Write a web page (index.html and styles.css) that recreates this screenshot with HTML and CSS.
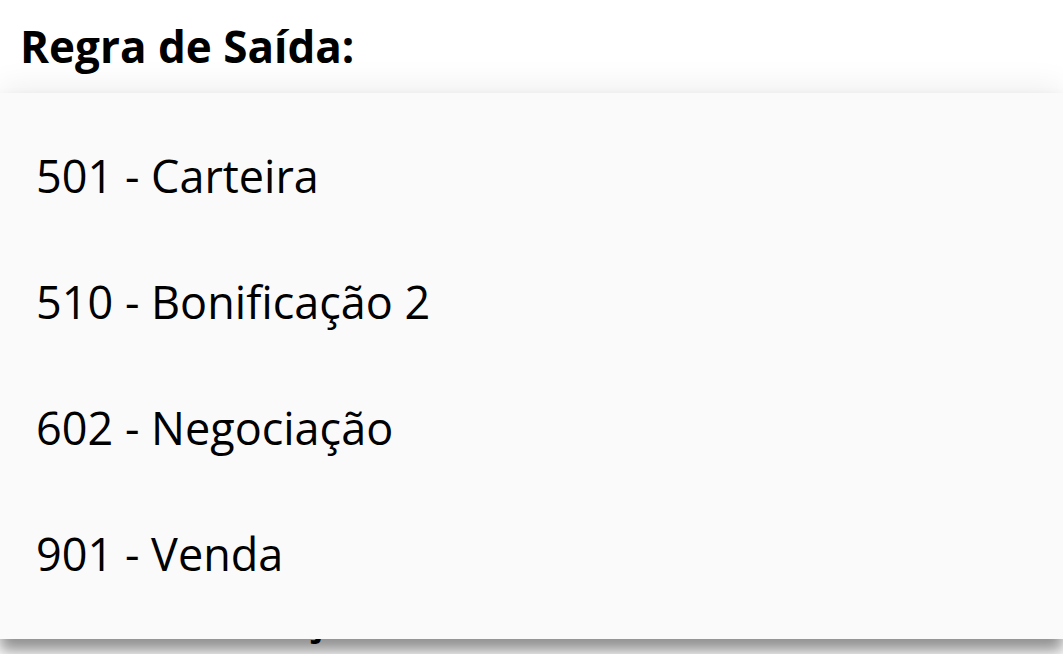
FILE: index.html
```html
<!DOCTYPE html>
<html lang="pt-BR">
<head>
<meta charset="utf-8">
<title>Regra de Saída</title>
<link rel="stylesheet" href="styles.css">
</head>
<body>
<main class="page">
  <h1 class="label">Regra de Saída:</h1>
  <div class="field"></div>
  <h2 class="label">Local de Isenção:</h2>
</main>
<div class="menu" role="listbox">
  <div class="option" role="option">501 - Carteira</div>
  <div class="option" role="option">510 - Bonificação 2</div>
  <div class="option" role="option">602 - Negociação</div>
  <div class="option" role="option">901 - Venda</div>
</div>
</body>
</html>
```
FILE: styles.css
```css
html, body {
  margin: 0;
  padding: 0;
  background: #ffffff;
  height: 100%;
  overflow: hidden;
}
body {
  font-family: "Open Sans", "Noto Sans", sans-serif;
  color: #000;
  position: relative;
}
.page {
  display: flex;
  flex-direction: column;
  padding: 18px 20px 0;
}
.label {
  margin: 0;
  font-size: 44px;
  font-weight: 700;
  line-height: 56px;
  letter-spacing: 0;
}
.field {
  height: 514px;
  flex: none;
}
.menu {
  position: absolute;
  top: 93px;
  left: 0;
  right: 0;
  height: 546px;
  box-sizing: border-box;
  padding-top: 19px;
  background: #fafafa;
  box-shadow: 0 12px 14px rgba(0, 0, 0, 0.42), 0 -6px 30px rgba(0, 0, 0, 0.07);
  display: flex;
  flex-direction: column;
}
.option {
  height: 126px;
  flex: none;
  display: flex;
  align-items: center;
  padding-left: 36px;
  font-size: 45px;
  font-weight: 400;
  line-height: 1;
  color: #000;
}
```
